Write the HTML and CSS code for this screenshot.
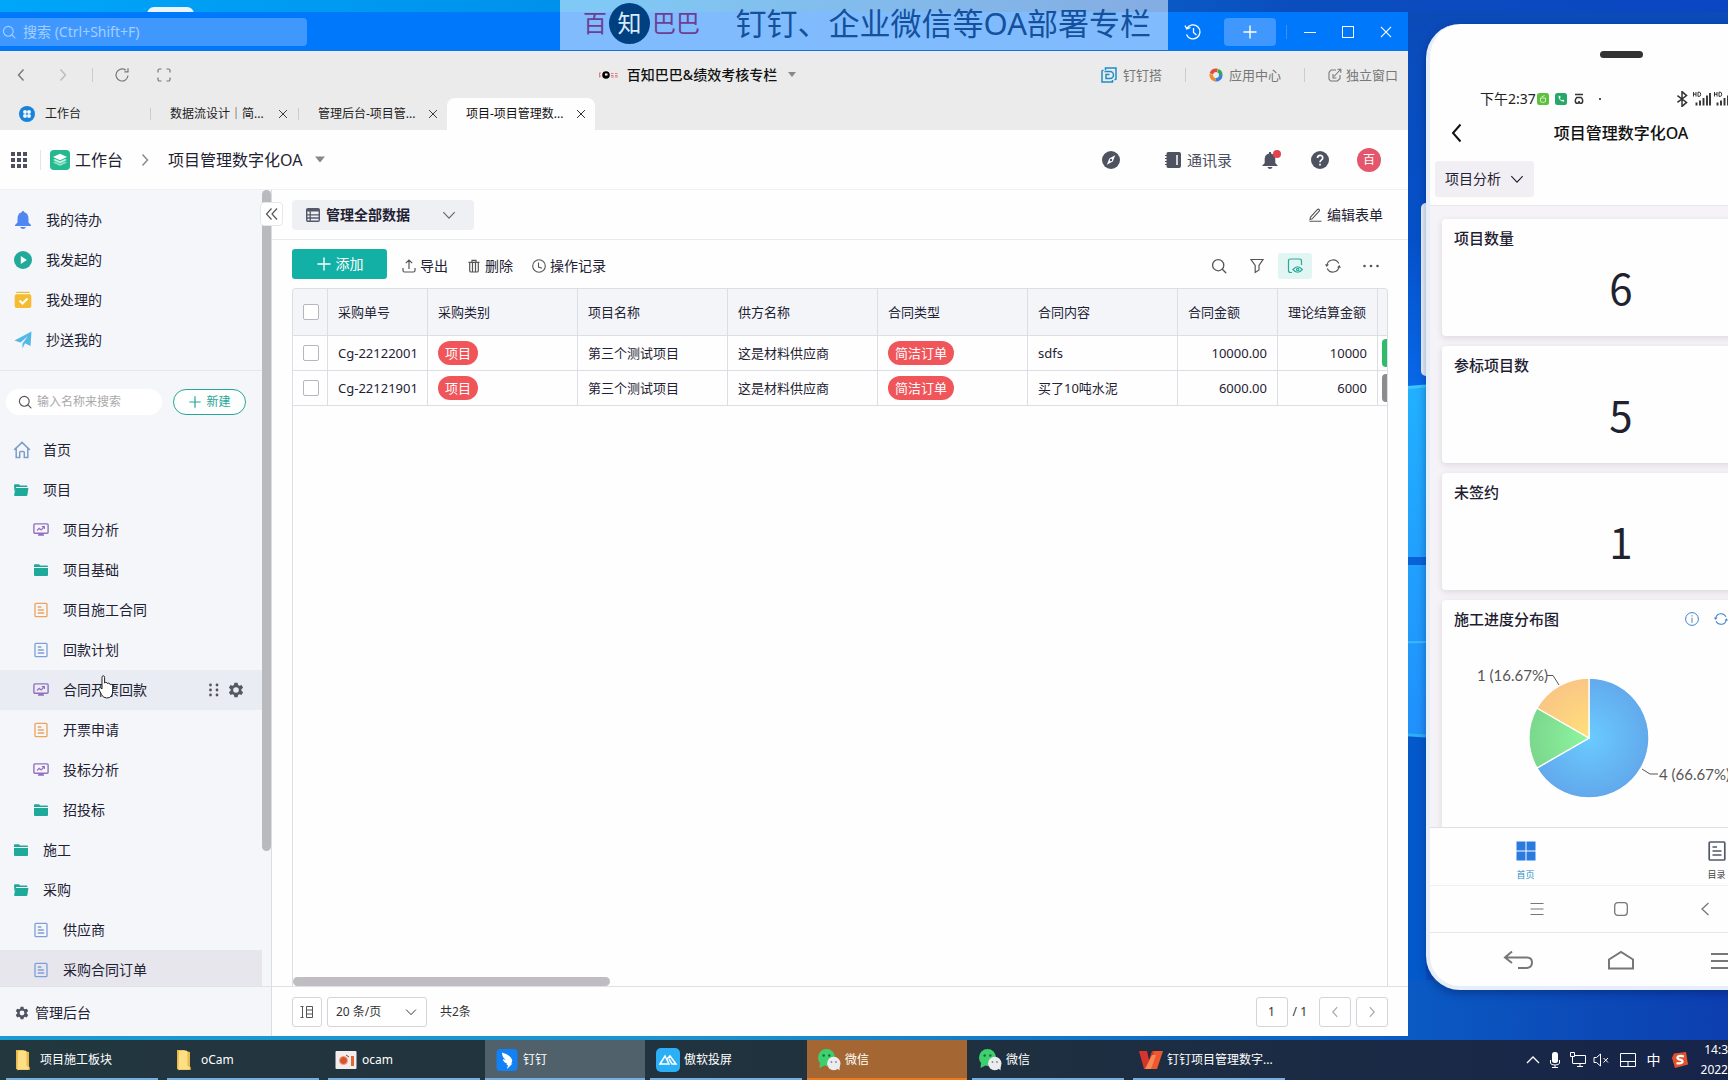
FILE: index.html
```html
<!DOCTYPE html>
<html lang="zh-CN">
<head>
<meta charset="utf-8">
<title>项目管理数字化OA</title>
<link rel="stylesheet" href="styles.css">
</head>
<body>
<svg class="sprite" aria-hidden="true">
  <symbol id="i-search" viewBox="0 0 16 16"><g fill="none" stroke="currentColor" stroke-width="1.3" stroke-linecap="round"><circle cx="7.2" cy="7.2" r="5.6"/><path d="M11.3 11.3 14.8 14.8"/></g></symbol>
  <symbol id="i-x" viewBox="0 0 16 16"><path d="M3.5 3.5 12.5 12.5M12.5 3.5 3.5 12.5" fill="none" stroke="currentColor"/></symbol>
  <symbol id="i-left" viewBox="0 0 16 16"><path d="M10.5 2.5 5.5 8l5 5.5" fill="none" stroke="currentColor" stroke-width="1.4"/></symbol>
  <symbol id="i-right" viewBox="0 0 16 16"><path d="M5.5 2.5 10.5 8l-5 5.5" fill="none" stroke="currentColor" stroke-width="1.4"/></symbol>
  <symbol id="i-down" viewBox="0 0 16 16"><path d="M1.500 4.800 8 11.500l6.500-6.700" fill="none" stroke="currentColor" stroke-width="1.3"/></symbol>
  <symbol id="i-caret" viewBox="0 0 10 6"><path d="M0 0h10L5 6z" fill="currentColor"/></symbol>
  <symbol id="i-plus" viewBox="0 0 16 16"><path d="M8 1.500v13M1.500 8h13" fill="none" stroke="currentColor" stroke-width="1.400"/></symbol>
  <symbol id="i-reload" viewBox="0 0 16 16"><path d="M14 8.500A6 6 0 1 1 11.800 3.300M14 1.300v3.500h-3.600" fill="none" stroke="currentColor" stroke-width="1.200"/></symbol>
  <symbol id="i-full" viewBox="0 0 16 16"><path d="M5.500 2H3.500A1.500 1.500 0 0 0 2 3.500v2M10.500 2h2A1.500 1.500 0 0 1 14 3.500v2M14 10.500v2a1.500 1.500 0 0 1-1.500 1.500h-2M5.500 14h-2A1.500 1.500 0 0 1 2 12.500v-2" fill="none" stroke="currentColor" stroke-width="1.200"/></symbol>
  <symbol id="i-sync" viewBox="0 0 16 16"><path d="M2 6.800A6.200 6.200 0 0 1 13.700 5.600M14 9.200A6.200 6.200 0 0 1 2.300 10.400" fill="none" stroke="currentColor" stroke-width="1.200"/><path d="M0 6.200l4 .200-2.400 2.600zM16 9.800l-4-.200 2.400-2.600z" fill="currentColor"/></symbol>
  <symbol id="i-gear" viewBox="0 0 16 16"><path fill="currentColor" fill-rule="evenodd" d="M6.400.8h3.200l.5 2.200 1.200.7 2.200-.7 1.600 2.800-1.700 1.500v1.400l1.700 1.500-1.600 2.800-2.200-.7-1.200.7-.5 2.200H6.400l-.5-2.200-1.200-.7-2.200.7L.9 10.200l1.700-1.500V7.300L.9 5.800 2.500 3l2.200.7 1.200-.7zM8 5.200a2.800 2.800 0 1 0 0 5.600 2.800 2.800 0 0 0 0-5.600z"/></symbol>
  <symbol id="i-folder" viewBox="0 0 16 16"><path fill="#1fa99b" d="M1 3.200q0-1 1-1h4l1.200 1.300H14q1 0 1 1V5H1zM1 6h14v7q0 .9-1 .9H2q-1 0-1-.9z"/></symbol>
  <symbol id="i-folder-open" viewBox="0 0 16 16"><path fill="#1fa99b" d="M1 3.200q0-1 1-1h4l1.200 1.300H13.500q.9 0 .9 1V5H3.200L1.500 10zM2.800 6h12.600l-1 7q-.2.900-1 .9H2q-1 0-.9-.9z"/></symbol>
  <symbol id="i-chart" viewBox="0 0 16 16"><g fill="none" stroke="#9470be" stroke-width="1.400"><rect x=".9" y="1.900" width="14.200" height="9.400" rx="1"/><path d="M4 8.500l2.200-2.200 2 1.600 3-3M8.800 4.600h2.600v2.300" stroke-width="1.100"/></g><path fill="#9470be" d="M5.500 11.500h5l.6 2.300H4.900z"/></symbol>
  <symbol id="i-doc" viewBox="0 0 16 16"><g fill="none" stroke="currentColor"><rect x="2" y="1.300" width="12" height="13.400" rx="1" stroke-width="1.300"/><path d="M4.800 5h3.600M4.800 8h6M4.800 11h6.400" stroke-width="1.300"/></g></symbol>
  <symbol id="i-home" viewBox="0 0 18 18"><path d="M1.200 8.900 9 1.400l7.800 7.500M3.200 7.600v9h3.500v-5q0-1 1-1h2.600q1 0 1 1v5h3.500v-9" fill="none" stroke="#7f9ccb" stroke-width="1.500"/></symbol>
  <symbol id="i-wechat" viewBox="0 0 24 24"><circle cx="9.500" cy="9.500" r="8.500" fill="#3ed06f"/><path d="M3 15l-.500 5 5-2.500z" fill="#3ed06f"/><circle cx="6.700" cy="7.500" r="1.200" fill="#176a35"/><circle cx="12.300" cy="7.500" r="1.200" fill="#176a35"/><circle cx="16.800" cy="15.500" r="6.700" fill="#ececf0"/><path d="M20 20l2.500 2.500.200-5z" fill="#ececf0"/><circle cx="14.500" cy="14" r=".9" fill="#888"/><circle cx="19" cy="14" r=".9" fill="#888"/></symbol>
  <symbol id="i-yfolder" viewBox="0 0 24 24"><path d="M4 2h7q1 0 1 1l5 1v14l1 3q0 1-1 1H7l-3-1z" fill="#e9b949"/><path d="M6 3l7-.500q1.500 0 1.500 1.500v14l3 1.500-2 2H7l-1.500 1z" fill="#ffdf86"/></symbol>
  <symbol id="i-signal" viewBox="0 0 18 16"><path d="M3.500 11.500v3M7 9.500v5M10.500 7v7.500M14 4.500v10M17 2v12.500" stroke="#333" stroke-width="1.900"/><path d="M.5 1v4.500M.5 3.200h2.500M3 1v4.500M5 1.200v4.200h1.200q1.500 0 1.500-2.100t-1.500-2.100z" fill="none" stroke="#333" stroke-width="1"/></symbol>
</svg>

<div class="desktop">
  <svg class="wallpaper" preserveAspectRatio="none" viewBox="0 0 1728 1080" aria-hidden="true">
    <defs>
      <linearGradient id="sky"><stop offset="0" stop-color="#00a6f8"/><stop offset=".35" stop-color="#0090ea"/><stop offset=".75" stop-color="#0b4dbd"/><stop offset="1" stop-color="#0a46c2"/></linearGradient>
      <linearGradient id="ray" x1="0" y1="0" x2="0" y2="1"><stop offset="0" stop-color="#0b4bb8"/><stop offset=".6" stop-color="#0550c8"/><stop offset="1" stop-color="#0868e8"/></linearGradient>
      <linearGradient id="pane" x1="0" y1="0" x2="0" y2="1"><stop offset="0" stop-color="#22b0ff"/><stop offset="1" stop-color="#2090fb"/></linearGradient>
      <linearGradient id="floor"><stop offset="0" stop-color="#189cd2"/><stop offset=".4" stop-color="#1c93cb"/><stop offset=".8" stop-color="#0a5cc4"/><stop offset="1" stop-color="#0d3eb0"/></linearGradient>
    </defs>
    <rect width="1728" height="1080" fill="url(#sky)"/>
    <rect x="1300" y="12" width="428" height="376" fill="url(#ray)"/>
    <path d="M1300 396 1426 386V736L1300 728z" fill="url(#pane)"/>
    <path d="M1300 396 1426 386" stroke="#3cc6ff" stroke-width="3"/>
    <path d="M1300 557h126v8h-126z" fill="#0a63d6"/>
    <path d="M1300 644 1426 642" stroke="#3fb8ff" stroke-width="2"/>
    <path d="M1300 728 1426 736V1040H1300z" fill="#0459ca"/>
    <path d="M1300 728 1426 736" stroke="#2cb0f4" stroke-width="3"/>
    <path d="M0 980h1728v60H0z" fill="url(#floor)"/>
    <rect x="147" y="7" width="47" height="14" rx="7" fill="#eaf4fb"/>
  </svg>

  <main class="window">
    <header class="titlebar">
      <label class="global-search"><svg class="s14"><use href="#i-search"/></svg><input type="text" placeholder="搜索 (Ctrl+Shift+F)" aria-label="搜索"></label>
      <div class="win-controls">
        <button aria-label="历史"><svg class="s18" viewBox="0 0 18 18" fill="none" stroke="currentColor" stroke-width="1.300"><path d="M3 5.200A7 7 0 1 1 2.500 11.500M1 2.500l1.800 3.500 3.700-1.500M9.500 5v4.500l3 2.500"/></svg></button>
        <button class="new-btn" aria-label="新建"><svg class="s16"><use href="#i-plus"/></svg></button>
        <i class="bar"></i>
        <button aria-label="最小化"><svg class="s12" viewBox="0 0 12 12"><path d="M0 6.500h12" stroke="currentColor"/></svg></button>
        <button aria-label="最大化"><svg class="s12" viewBox="0 0 12 12"><rect x=".5" y=".5" width="11" height="11" fill="none" stroke="currentColor"/></svg></button>
        <button aria-label="关闭"><svg class="s18"><use href="#i-x"/></svg></button>
      </div>
    </header>

    <div class="navbar">
      <div class="nav-left">
        <button aria-label="后退"><svg class="s16"><use href="#i-left"/></svg></button>
        <button class="off" aria-label="前进"><svg class="s16"><use href="#i-right"/></svg></button>
        <i class="bar"></i>
        <button aria-label="刷新"><svg class="s16"><use href="#i-reload"/></svg></button>
        <button aria-label="全屏"><svg class="s16"><use href="#i-full"/></svg></button>
      </div>
      <button class="org"><svg class="org-logo" viewBox="0 0 20 8"><circle cx="8" cy="4" r="3.800" fill="#000"/><path d="M7 2.500h2.500v2H7z" fill="#fff"/><path d="M1 2h2M1.500 2v4.500M3 5h-1M13 2.500h2.500M13 4.500h2.500M13 6h3M17 2.500h2.500M17 4.500h2.500M17 6h3" stroke="#e4606a" stroke-width=".8"/></svg>百知巴巴&amp;绩效考核专栏<svg class="caret"><use href="#i-caret"/></svg></button>
      <div class="nav-right">
        <a href="#"><svg class="s16" viewBox="0 0 16 16" fill="none" stroke="#1f8cc8" stroke-width="1.500"><path d="M4.500 3V1H15v11l-1.500 1M11.500 13v2H1V4l1.500-1"/><path d="M3.500 4.500h5.500a3.500 3.500 0 0 1 0 7H5V7.500h3.500"/></svg>钉钉搭</a>
        <i class="bar"></i>
        <a href="#"><svg class="s14" viewBox="0 0 14 14"><circle cx="7" cy="7" r="4.800" fill="none" stroke="#e14b3c" stroke-width="3.600" stroke-dasharray="7.500 30" stroke-dashoffset="-16"/><circle cx="7" cy="7" r="4.800" fill="none" stroke="#36a852" stroke-width="3.600" stroke-dasharray="7.500 30" stroke-dashoffset="-24"/><circle cx="7" cy="7" r="4.800" fill="none" stroke="#3c7de0" stroke-width="3.600" stroke-dasharray="8 30"/><circle cx="7" cy="7" r="4.800" fill="none" stroke="#f08a2c" stroke-width="3.600" stroke-dasharray="7.500 30" stroke-dashoffset="-8"/></svg>应用中心</a>
        <i class="bar"></i>
        <a class="detach" href="#"><svg class="s14" viewBox="0 0 14 14" fill="none" stroke="#777" stroke-width="1.100"><path d="M8 2H3L1 4.500V11l1.500 2h7L12 10.500V7M6 8.500 12.500 1.500M9.500 1.200h3.300v3.500M5 6v4h3.500"/></svg>独立窗口</a>
      </div>
    </div>

    <nav class="tabs">
      <a class="tab" href="#"><svg class="s16" viewBox="0 0 16 16"><circle cx="8" cy="8" r="8" fill="#1684dc"/><g fill="#fff"><rect x="4.300" y="4.300" width="3.400" height="3.400" rx="1"/><rect x="8.300" y="4.300" width="3.400" height="3.400" rx="1"/><rect x="4.300" y="8.300" width="3.400" height="3.400" rx="1"/><rect x="8.300" y="8.300" width="3.400" height="3.400" rx="1"/></g></svg><span>工作台</span></a>
      <a class="tab" href="#"><span>数据流设计｜简...</span><svg class="s14"><use href="#i-x"/></svg></a>
      <a class="tab plain" href="#"><span>管理后台-项目管...</span><svg class="s14"><use href="#i-x"/></svg></a>
      <a class="tab active" href="#"><span>项目-项目管理数...</span><svg class="s14"><use href="#i-x"/></svg></a>
    </nav>

    <div class="appbar">
      <button class="launcher" aria-label="应用"><svg class="s16" viewBox="0 0 16 16" fill="#4d5060"><path d="M0 0h4v4H0zM6 0h4v4H6zM12 0h4v4h-4zM0 6h4v4H0zM6 6h4v4H6zM12 6h4v4h-4zM0 12h4v4H0zM6 12h4v4H6zM12 12h4v4h-4z"/></svg></button>
      <i class="bar"></i>
      <svg class="s20" viewBox="0 0 20 20"><rect width="20" height="20" rx="4" fill="#25b98f"/><path d="M3 12.500 10 16l7-3.500-2-1-5 2.300-5-2.300z" fill="#8fe2c9"/><path d="M3 10 10 13.300 17 10l-2-1-5 2.300L5 9z" fill="#c9f4e7"/><path d="M3 7 10 3.800 17 7l-7 3.300z" fill="#fff"/></svg>
      <a class="crumb" href="#">工作台</a>
      <svg class="s16 sep"><use href="#i-right"/></svg>
      <a class="crumb" href="#">项目管理数字化OA</a>
      <svg class="caret big"><use href="#i-caret"/></svg>
      <div class="app-actions">
        <button aria-label="导航"><svg class="s18" viewBox="0 0 18 18"><circle cx="9" cy="9" r="9" fill="#4f5261"/><path d="M13.200 4.300 10.800 10.500 4.800 13.700 7.300 7.500z" fill="#fff"/><circle cx="9" cy="9" r="1.200" fill="#4f5261"/></svg></button>
        <button class="contacts"><svg class="s16" viewBox="0 0 16 16"><path fill="#4f5261" d="M3 0h11q2 0 2 2v12q0 2-2 2H3q-1.500 0-1.500-2V2Q1.500 0 3 0z"/><path d="M0 3.500h3M0 6.500h3M0 9.500h3M0 12.500h3" stroke="#4f5261" stroke-width="1.200"/><path d="M12 3v10" stroke="#fff" stroke-width="1.500"/></svg>通讯录</button>
        <button class="bell" aria-label="通知"><svg class="s18" viewBox="0 0 18 18"><path fill="#4f5261" d="M8 1h2v1.500q4.300 1 4.300 5.500v4L17 15H1l2.700-3V8Q3.700 3.500 8 2.500zM6.500 16h5q-.5 2-2.500 2t-2.500-2z"/></svg></button>
        <button aria-label="帮助"><svg class="s18" viewBox="0 0 18 18"><circle cx="9" cy="9" r="9" fill="#4f5261"/><path d="M6.500 7q0-2.700 2.600-2.700T11.700 7q0 1.300-1.400 2.100Q9 9.900 9 11.300M9 12.700v1.700" fill="none" stroke="#fff" stroke-width="1.700"/></svg></button>
        <button class="avatar">百</button>
      </div>
    </div>

    <div class="body">
      <aside class="sidebar">
        <div class="side-scroll">
          <ul class="quick">
            <li><a href="#"><svg class="s18" viewBox="0 0 18 18"><path fill="#5086f2" d="M9 0q1.200 0 1.300 1.300Q14.500 2.500 14.500 8v3.500L17 14v1H1v-1l2.500-2.500V8q0-5.500 4.200-6.700Q7.800 0 9 0zM6 16h6q-1 2-3 2t-3-2z"/></svg>我的待办</a></li>
            <li><a href="#"><svg class="s18" viewBox="0 0 18 18"><circle cx="9" cy="9" r="9" fill="#21a99a"/><path d="M6.800 5v8l6-4z" fill="#fff"/></svg>我发起的</a></li>
            <li><a href="#"><svg class="s18" viewBox="0 0 18 18"><path fill="#f5bb31" d="M3 .8h12q1 0 1 1.200H2Q2 .8 3 .8zM2.500 3.200h13q1.800 0 1.800 1.800v10q0 2-2 2H2.700q-2 0-2-2V5q0-1.800 1.800-1.800z"/><path d="M5.500 9.500l3 3 5-5" fill="none" stroke="#fff" stroke-width="2"/></svg>我处理的</a></li>
            <li><a href="#"><svg class="s18" viewBox="0 0 18 18"><path fill="#51b9e4" d="M.5 9.500 17.500.5l-1 14.500-5.500-2.800L8.500 17.500v-5L14 5l-7.500 6.500z"/></svg>抄送我的</a></li>
          </ul>
          <div class="side-tools">
            <label class="side-search"><svg class="s14"><use href="#i-search"/></svg><input type="text" placeholder="输入名称来搜索" aria-label="输入名称来搜索"></label>
            <button class="create"><svg class="s14"><use href="#i-plus"/></svg>新建</button>
          </div>
          <ul class="tree">
            <li><a href="#"><svg class="s18"><use href="#i-home"/></svg>首页</a></li>
            <li><a href="#"><svg class="s16"><use href="#i-folder-open"/></svg>项目</a>
              <ul>
                <li><a href="#"><svg class="s16"><use href="#i-chart"/></svg>项目分析</a></li>
                <li><a href="#"><svg class="s16"><use href="#i-folder"/></svg>项目基础</a></li>
                <li><a href="#"><svg class="s16 orange"><use href="#i-doc"/></svg>项目施工合同</a></li>
                <li><a href="#"><svg class="s16 blue"><use href="#i-doc"/></svg>回款计划</a></li>
                <li class="hover"><a href="#"><svg class="s16"><use href="#i-chart"/></svg>合同开票回款</a>
                  <span class="row-tools"><svg class="drag" viewBox="0 0 10 14" fill="#555"><circle cx="1.500" cy="2" r="1.400"/><circle cx="8" cy="2" r="1.400"/><circle cx="1.500" cy="7" r="1.400"/><circle cx="8" cy="7" r="1.400"/><circle cx="1.500" cy="12" r="1.400"/><circle cx="8" cy="12" r="1.400"/></svg><svg class="s16"><use href="#i-gear"/></svg></span>
                  <svg class="pointer" viewBox="0 0 16 24"><path d="M4 13V2.500Q4 .8 5.300.8t1.300 1.700V8q.6-.8 1.600-.6 1.200.2 1.200 1.200.7-.7 1.700-.4 1 .3 1 1.400.7-.5 1.600-.1 1 .4 1 1.800V16q0 7-6 7-3.700 0-5.200-3.500L.9 14.500q-.5-1.500.7-1.900 1-.3 2.400 1.400z" fill="#fff" stroke="#222"/></svg>
                </li>
                <li><a href="#"><svg class="s16 orange"><use href="#i-doc"/></svg>开票申请</a></li>
                <li><a href="#"><svg class="s16"><use href="#i-chart"/></svg>投标分析</a></li>
                <li><a href="#"><svg class="s16"><use href="#i-folder"/></svg>招投标</a></li>
              </ul>
            </li>
            <li><a href="#"><svg class="s16"><use href="#i-folder"/></svg>施工</a></li>
            <li><a href="#"><svg class="s16"><use href="#i-folder-open"/></svg>采购</a>
              <ul>
                <li><a href="#"><svg class="s16 blue"><use href="#i-doc"/></svg>供应商</a></li>
                <li class="current"><a href="#"><svg class="s16 blue"><use href="#i-doc"/></svg>采购合同订单</a></li>
              </ul>
            </li>
          </ul>
          <i class="vbar"></i>
        </div>
        <a class="admin" href="#"><svg class="s14"><use href="#i-gear"/></svg>管理后台</a>
        <button class="collapse" aria-label="收起"><svg class="s14" viewBox="0 0 14 14" fill="none" stroke="#555" stroke-width="1.200"><path d="M6.500 1.500 1.500 7l5 5.500M12 1.500 7 7l5 5.500"/></svg></button>
      </aside>

      <section class="content">
        <div class="viewbar">
          <button class="view"><svg class="s14" viewBox="0 0 14 14"><rect x=".7" y=".7" width="12.600" height="12.600" rx="1.200" fill="none" stroke="#555869" stroke-width="1.400"/><path d="M.7 1h12.600v2.500H.7z" fill="#555869"/><path d="M.7 6.800h12.600M.7 10h12.600M4.200 3v10" stroke="#555869" stroke-width="1.300"/></svg><strong>管理全部数据</strong><svg class="s14"><use href="#i-down"/></svg></button>
          <a class="edit" href="#"><svg class="s14" viewBox="0 0 14 14" fill="none" stroke="#555" stroke-width="1.100"><path d="M2.500 9.200 9.500 1.500q.8-.7 1.600 0t.1 1.700L4.200 10.800 2 11.500zM1.500 13.300h12"/></svg>编辑表单</a>
        </div>
        <div class="toolbar">
          <button class="add"><svg class="s16"><use href="#i-plus"/></svg>添加</button>
          <button class="tool"><svg class="s14" viewBox="0 0 14 14" fill="none" stroke="#555" stroke-width="1.200"><path d="M1 9v2.500q0 1.500 1.500 1.500h9q1.500 0 1.500-1.500V9M7 10V1M3.800 4.200 7 1l3.200 3.200"/></svg>导出</button>
          <button class="tool"><svg class="s14" viewBox="0 0 14 14" fill="none" stroke="#555" stroke-width="1.200"><path d="M1.500 3.300h11M5 3V1.300h4V3M2.700 3.500v8.200q0 1.300 1.300 1.300h6q1.300 0 1.300-1.300V3.500M5.500 4v9M8.500 4v9"/></svg>删除</button>
          <button class="tool"><svg class="s14" viewBox="0 0 14 14" fill="none" stroke="#555" stroke-width="1.100"><circle cx="7" cy="7" r="6.300"/><path d="M6.500 3.500V8l3.500 1.300"/></svg>操作记录</button>
          <div class="icon-tools">
            <button aria-label="搜索"><svg class="s16"><use href="#i-search"/></svg></button>
            <button aria-label="筛选"><svg class="s16" viewBox="0 0 16 16" fill="none" stroke="currentColor" stroke-width="1.200"><path d="M2 1.500h12L10 7.500v4.500l-3.800 2.500v-7z"/></svg></button>
            <button class="on" aria-label="显示"><svg class="s16" viewBox="0 0 16 16" fill="none" stroke="currentColor" stroke-width="1.200"><path d="M14.500 7V3q0-2-2-2h-9q-2 0-2 2v9.500q0 2 2 2H5"/><path d="M6 11.500q4.500-5.500 9.300 0-4.800 5.500-9.300 0z"/><circle cx="10.700" cy="11.500" r="1.200"/></svg></button>
            <button aria-label="刷新"><svg class="s16"><use href="#i-sync"/></svg></button>
            <button aria-label="更多"><svg class="s16" viewBox="0 0 16 16" fill="#555"><circle cx="1.500" cy="8" r="1.300"/><circle cx="8" cy="8" r="1.300"/><circle cx="14.500" cy="8" r="1.300"/></svg></button>
          </div>
        </div>
        <div class="grid">
          <table>
            <colgroup><col class="c-check"><col class="c-s"><col class="c-m"><col class="c-m"><col class="c-m"><col class="c-m"><col class="c-m"><col class="c-s"><col class="c-s"><col class="c-s"></colgroup>
            <thead><tr><th><input type="checkbox" aria-label="全选"></th><th>采购单号</th><th>采购类别</th><th>项目名称</th><th>供方名称</th><th>合同类型</th><th>合同内容</th><th>合同金额</th><th>理论结算金额</th><th></th></tr></thead>
            <tbody>
              <tr><td><input type="checkbox" aria-label="Cg-22122001"></td><td>Cg-22122001</td><td><span class="tag">项目</span></td><td>第三个测试项目</td><td>这是材料供应商</td><td><span class="tag">简洁订单</span></td><td>sdfs</td><td class="num">10000.00</td><td class="num">10000</td><td class="cut"><span class="state green"></span></td></tr>
              <tr><td><input type="checkbox" aria-label="Cg-22121901"></td><td>Cg-22121901</td><td><span class="tag">项目</span></td><td>第三个测试项目</td><td>这是材料供应商</td><td><span class="tag">简洁订单</span></td><td>买了10吨水泥</td><td class="num">6000.00</td><td class="num">6000</td><td class="cut"><span class="state gray"></span></td></tr>
            </tbody>
          </table>
          <i class="hbar"></i>
        </div>
        <footer class="pager">
          <button class="box density" aria-label="行高"><svg class="s14" viewBox="0 0 14 14" fill="none" stroke="#555"><path d="M2.500 1.500v11M.5 1.500h3M.5 12.500h3M6.500 1.500h6v11h-6zM6.500 5h6M6.500 9h6"/></svg></button>
          <label class="box size"><select aria-label="每页条数"><option>20 条/页</option></select><svg class="s12"><use href="#i-down"/></svg></label>
          <span class="total">共2条</span>
          <input class="box page" type="text" value="1" aria-label="页码"><span class="of">/ 1</span>
          <button class="box step" aria-label="上一页"><svg class="s14"><use href="#i-left"/></svg></button>
          <button class="box step" aria-label="下一页"><svg class="s14"><use href="#i-right"/></svg></button>
        </footer>
      </section>
    </div>
  </main>

  <div class="banner">
    <span class="brand">百<b>知</b>巴巴</span>
    <span class="slogan">钉钉、企业微信等OA部署专栏</span>
  </div>

  <i class="phone-key"></i>
  <section class="phone">
    <div class="earpiece"><i></i></div>
    <div class="status">
      <span>下午2:37</span>
      <svg class="s12" viewBox="0 0 12 12"><rect width="12" height="12" rx="2.500" fill="#5fc040"/><path d="M3.500 5h5v3.500q-2.500 2-5 0zM4.500 4l3-1.500" fill="none" stroke="#d9f7cd" stroke-width=".9"/></svg>
      <svg class="s12 call" viewBox="0 0 12 12"><rect width="12" height="12" rx="2.500" fill="#25a868"/><path d="M3.500 2.800Q3.500 8.500 9.200 8.800L9 7 7.700 6.700l-.8.600Q5.500 6.700 4.900 5.400l.7-.8L5.200 3z" fill="#fff"/></svg>
      <svg class="s12" viewBox="0 0 12 12" fill="none" stroke="#333"><path d="M2 1.500h8M3.800 4.500q-1.500 1.300-1.500 3.200 0 2.600 2 2.600 1.700 0 1.700-2.300 0 2.300 1.700 2.300 2 0 2-2.600 0-1.900-1.500-3.200z" stroke-width="1.500"/></svg>
      <i class="dot"></i>
      <div class="radio">
        <svg class="s16" viewBox="0 0 14 14" fill="none" stroke="#333" stroke-width="1.300"><path d="M3 4l8 6L7 13.500V.5L11 4l-8 6"/></svg>
        <svg class="sig"><use href="#i-signal"/></svg><svg class="sig"><use href="#i-signal"/></svg>
        <svg class="sig" viewBox="0 0 18 16"></svg><svg class="sig" viewBox="0 0 18 16"></svg>
      </div>
    </div>
    <div class="phone-title"><button aria-label="返回"><svg class="s20" viewBox="0 0 20 20"><path d="M14.500 1.500 7 10l7.500 8.500" fill="none" stroke="#111" stroke-width="2"/></svg></button><h1>项目管理数字化OA</h1></div>
    <div class="phone-filter"><button>项目分析<svg class="s14"><use href="#i-down"/></svg></button></div>
    <div class="cards">
      <article class="card"><h2>项目数量</h2><p>6</p></article>
      <article class="card"><h2>参标项目数</h2><p>5</p></article>
      <article class="card"><h2>未签约</h2><p>1</p></article>
      <article class="card">
        <h2>施工进度分布图<span class="card-icons"><svg class="s14" viewBox="0 0 14 14" fill="none" stroke="currentColor"><circle cx="7" cy="7" r="6.400"/><path d="M7 3.200v1.300M7 5.800v5"/></svg><svg class="s14"><use href="#i-sync"/></svg><svg class="s14"></svg><svg class="s14"></svg></span></h2>
        <svg class="pie" viewBox="0 0 334 200">
          <defs>
            <radialGradient id="pb" gradientUnits="userSpaceOnUse" cx="135" cy="108" r="60"><stop offset="0" stop-color="#6acbff"/><stop offset="1" stop-color="#62a9ec"/></radialGradient>
            <radialGradient id="pg" gradientUnits="userSpaceOnUse" cx="135" cy="108" r="60"><stop offset="0" stop-color="#8ff5a0"/><stop offset="1" stop-color="#7ad78c"/></radialGradient>
            <radialGradient id="po" gradientUnits="userSpaceOnUse" cx="135" cy="108" r="60"><stop offset="0" stop-color="#ffe07a"/><stop offset="1" stop-color="#fac585"/></radialGradient>
          </defs>
          <g stroke="#fff" stroke-width="1.300">
            <path d="M135 109V49A60 60 0 1 1 83 139z" fill="url(#pb)"/>
            <path d="M135 109 83 139A60 60 0 0 1 83 79z" fill="url(#pg)"/>
            <path d="M135 109 83 79A60 60 0 0 1 135 49z" fill="url(#po)"/>
          </g>
          <path d="M93 46.500h6l6 9.500M188 140l8 5h8" fill="none" stroke="#555"/>
          <text x="23" y="52">1 (16.67%)</text>
          <text x="205" y="151">4 (66.67%)</text>
        </svg>
      </article>
    </div>
    <nav class="phone-tabs">
      <a class="on" href="#"><svg class="s20" viewBox="0 0 20 20" fill="#2a7ae0"><path d="M.5.500h9v9h-9zM10.500.500h9v9h-9zM.5 10.500h9v9h-9zM10.500 10.500h9v9h-9z"/></svg>首页</a>
      <a href="#"><svg class="s20" viewBox="0 0 20 20" fill="none" stroke="#555869"><rect x="2.200" y="1" width="15.600" height="18" rx="1" stroke-width="1.700"/><path d="M5.500 6h4.500M5.500 10h9M5.500 14h9" stroke-width="1.700"/></svg>目录</a>
    </nav>
    <div class="sysnav">
      <svg class="s14" viewBox="0 0 14 14"><path d="M.5 1.500h13M.5 7h13M.5 12.500h13" stroke="#777" stroke-width="1.200"/></svg>
      <svg class="s14" viewBox="0 0 14 14"><rect x=".7" y=".7" width="12.600" height="12.600" rx="3" fill="none" stroke="#777" stroke-width="1.300"/></svg>
      <svg class="s14" viewBox="0 0 14 14"><path d="M10.500 1 4 7l6.500 6" fill="none" stroke="#777" stroke-width="1.300"/></svg>
    </div>
    <div class="hardkeys">
      <svg class="key" viewBox="0 0 30 20" fill="none" stroke="#777" stroke-width="2"><path d="M9 1.500 2 7.500l7 5.500M2.500 7.500H24q5 0 5 5t-5 5.500H15"/></svg>
      <svg class="key" viewBox="0 0 30 20" fill="none" stroke="#777" stroke-width="2"><path d="M3 18.500V9.500L15 2l12 7.500v9z"/></svg>
      <svg class="key" viewBox="0 0 30 20" fill="none" stroke="#777" stroke-width="2"><path d="M2 4h26M2 11h26M2 18h26"/></svg>
    </div>
  </section>

  <footer class="taskbar">
    <button class="task"><svg class="s24"><use href="#i-yfolder"/></svg>项目施工板块</button>
    <button class="task"><svg class="s24"><use href="#i-yfolder"/></svg>oCam</button>
    <button class="task"><svg class="s24" viewBox="0 0 24 24"><rect x="1.500" y="3" width="21" height="18" rx="1" fill="#f3eeee"/><circle cx="9.500" cy="12.500" r="4" fill="#d8552c" stroke="#f0a183"/><path d="M17 8h3v10h-3z" fill="#e0673a"/><path d="M12 7l3 2" stroke="#a33"/></svg>ocam</button>
    <button class="task active"><svg class="s24" viewBox="0 0 24 24"><rect x="1.500" y="1" width="21" height="22" rx="4" fill="#1281f5"/><path d="M7 4.500q8 2 10 7 .7 2-1 4h1.500L12 21l1-4h-1.500l.5-1.500Q8 14 8 11l3 1Q7 9.500 7 4.500z" fill="#fff"/></svg>钉钉</button>
    <button class="task"><svg class="s24" viewBox="0 0 24 24"><rect x="0" y="0" width="24" height="24" rx="5" fill="#2bb0f8"/><path d="M4 16 9 8l4 8zM11 11l3-3 6 8h-4l-3-5" fill="none" stroke="#fff" stroke-width="1.500"/></svg>傲软投屏</button>
    <button class="task alert"><svg class="s24"><use href="#i-wechat"/></svg>微信</button>
    <button class="task"><svg class="s24"><use href="#i-wechat"/></svg>微信</button>
    <button class="task"><svg class="s24" viewBox="0 0 24 24"><path d="M0 3h8l2 9 3-9h4L11 21H5z" fill="#d9342b"/><path d="M15 3h9l-6 18h-7z" fill="#f0562f"/><path d="M13 7h4l-5 14H6z" fill="#f58a52"/></svg>钉钉项目管理数字...</button>
    <div class="tray">
      <svg class="s14" viewBox="0 0 14 14"><path d="M1 10 7 4l6 6" fill="none" stroke="#fff" stroke-width="1.300"/></svg>
      <svg class="s16" viewBox="0 0 16 16"><rect x="5" y="0" width="6" height="11" rx="2.500" fill="#fff"/><path d="M3.500 8v3q0 2 4.500 2t4.500-2V8M8 13v2.500M5 15.500h6" fill="none" stroke="#fff"/></svg>
      <svg class="s16" viewBox="0 0 16 16" fill="none" stroke="#fff"><path d="M5 3.500h10.500v8H3M10 11.500v3M7 14.500h6M.5.5h4v4h-4zM2.500 4.500v7"/></svg>
      <svg class="s16" viewBox="0 0 16 16" fill="none" stroke="#fff"><path d="M1 5.500h2.500L7.500 2v12l-4-3.500H1zM10.500 6l4.500 4.500M15 6l-4.500 4.500"/></svg>
      <svg class="s16 ime" viewBox="0 0 16 16" fill="none" stroke="#fff"><path d="M.5 1.500h15v13H.5zM.5 9.500h15M8 9.500v5"/></svg>
      <span class="lang">中</span>
      <svg class="s16" viewBox="0 0 16 16"><path d="M2 1.500 14 0l2 12.500L3 16 0 6z" fill="#e5512b"/><path d="M12 4.500q-5.500-1.500-6.500.8-.5 1.700 2.500 2.300t2.500 2.500q-1 2-6 1" fill="none" stroke="#fff" stroke-width="2.200"/></svg>
      <span class="clock"><span>14:3</span><span>2022</span></span>
    </div>
  </footer>
</div>
</body>
</html>
```
FILE: styles.css
```css
* { box-sizing: border-box; }
body {
  margin: 0;
  font: 14px/20px "Noto Sans", "Noto Sans CJK SC", sans-serif;
  color: #1f2233;
}
button, input, select { font: inherit; color: inherit; margin: 0; }
button { border: 0; background: none; padding: 0; display: flex; align-items: center; justify-content: center; white-space: nowrap; }
a { color: inherit; text-decoration: none; white-space: nowrap; }
ul { list-style: none; margin: 0; padding: 0; }
h1, h2, p { margin: 0; font-weight: 500; }
svg { flex: none; display: block; }
input::placeholder { color: inherit; opacity: 1; }

.sprite { position: absolute; width: 0; height: 0; }
.s12 { width: 12px; height: 12px; }
.s14 { width: 14px; height: 14px; }
.s16 { width: 16px; height: 16px; }
.s18 { width: 18px; height: 18px; }
.s20 { width: 20px; height: 20px; }
.s24 { width: 24px; height: 24px; }
.caret { width: 8px; height: 5px; color: #888; }
.caret.big { width: 10px; height: 7px; }
.bar { width: 1px; height: 14px; background: #ccc; }

.desktop { position: relative; height: 100vh; overflow: hidden; }
.wallpaper { position: absolute; inset: 0; width: 100%; height: 100%; }

.window {
  position: absolute;
  top: 12px; left: 0; right: 320px; bottom: 44px;
  display: flex;
  flex-direction: column;
  background: #fefefe;
}

.titlebar { display: flex; justify-content: space-between; align-items: center; height: 39px; padding-top: 2px; background: #0078fb; border-bottom: 1px solid #1a6fd0; color: #fff; }
.global-search { display: flex; align-items: center; gap: 7px; width: 307px; height: 28px; padding-left: 2px; background: #4098ff; border-radius: 0 4px 4px 0; color: #a3cfff; }
.global-search input { border: 0; background: none; width: 200px; padding: 0; }
.win-controls { display: flex; align-items: center; padding-right: 3px; }
.win-controls button { width: 38px; height: 28px; }
.win-controls .new-btn { width: 52px; margin: 0 10px 0 12px; background: #4098ff; border-radius: 4px; }
.win-controls .bar { background: #3f92ee; margin-right: 4px; }

.navbar { display: flex; align-items: center; justify-content: space-between; height: 47px; padding-bottom: 2px; background: #ebebeb; border-top: 2px solid #e2effa; }
.nav-left { display: flex; align-items: center; width: 350px; color: #777; }
.nav-left button { width: 42px; height: 28px; }
.nav-left .bar { margin: 0 8px; }
.nav-left .off { color: #bbb; }
.org { gap: 9px; font-weight: 500; color: #111; }
.org .caret { margin-left: 2px; }
.org-logo { width: 20px; height: 8px; }
.nav-right { display: flex; align-items: center; gap: 23px; width: 364px; padding-right: 10px; justify-content: flex-end; font-size: 13px; color: #777; }
.nav-right a { display: flex; align-items: center; gap: 6px; }
.nav-right .detach { gap: 4px; }

.tabs { display: flex; height: 32px; background: #ebebeb; font-size: 12px; color: #222; }
.tab { position: relative; display: flex; align-items: center; gap: 10px; width: 148px; padding: 0 9px 0 19px; }
.tab:first-child { width: 151px; }
.tab span { flex: 1; }
.tab:not(.active):not(.plain)::after { content: ""; position: absolute; right: 0; width: 1px; height: 12px; background: #ccc; }
.tab.active { background: #fefefe; border-radius: 8px 8px 0 0; color: #111; }

.appbar { display: flex; align-items: center; height: 60px; padding: 0 27px 0 11px; border-bottom: 1px solid #f0f0f2; }
.appbar > .bar { height: 20px; background: #e4e4e8; margin: 0 9px 0 13px; }
.crumb { font-size: 16px; margin-left: 5px; }
.appbar .sep { margin: 0 10px 0 14px; color: #888; }
.appbar > .caret { margin-left: 13px; }
.app-actions { display: flex; align-items: center; margin-left: auto; }
.app-actions button { font-size: 15px; color: #4b4e5e; }
.contacts { gap: 6px; margin: 0 29px 0 45px; }
.bell { position: relative; margin-right: 32px; }
.bell::after { content: ""; position: absolute; top: -1px; right: -2px; width: 8px; height: 8px; border-radius: 50%; background: #e4434d; }
.app-actions .avatar { width: 24px; height: 24px; margin-left: 28px; border-radius: 50%; background: #e4566c; color: #fff; font-size: 12px; }

.body { display: flex; flex: 1; min-height: 0; }
.sidebar { position: relative; display: flex; flex-direction: column; width: 272px; flex: none; background: #f4f6fa; border-right: 1px solid #dcdde2; }
.side-scroll { position: relative; flex: 1; min-height: 0; overflow: hidden; }
.vbar { position: absolute; top: 0; right: 0; width: 9px; height: 83%; border-radius: 5px; background: #b9babe; }
.quick { padding: 10px 0; border-bottom: 1px solid #e4e6eb; }
.quick a { display: flex; align-items: center; gap: 14px; height: 40px; padding-left: 14px; }
.side-tools { display: flex; gap: 11px; padding: 18px 25px 15px 6px; }
.side-search { display: flex; align-items: center; gap: 5px; width: 156px; height: 26px; padding-left: 12px; border-radius: 13px; background: #fff; color: #555; font-size: 12px; }
.side-search input { border: 0; background: none; padding: 0; width: 110px; color: #aaa; }
.create { width: 73px; height: 26px; gap: 4px; border: 1px solid #2aa596; border-radius: 13px; background: #fdfefe; color: #2aa596; font-size: 12px; }
.tree li { position: relative; }
.tree a { display: flex; align-items: center; height: 40px; padding-left: 13px; gap: 14px; margin-right: 9px; }
.tree a .s18 { margin-right: -2px; }
.tree ul a { padding-left: 33px; }
.tree .hover > a { background: #e9ecf2; }
.tree .current > a { background: #e6e6ec; }
.orange { color: #eea35d; }
.blue { color: #7f9fd8; }
.row-tools { position: absolute; right: 27px; top: 12px; display: flex; align-items: center; gap: 9px; color: #555862; }
.drag { width: 10px; height: 14px; }
.pointer { position: absolute; left: 98px; top: 5px; width: 16px; height: 24px; }
.admin { display: flex; align-items: center; gap: 6px; height: 50px; padding: 2px 0 0 15px; border-top: 1px solid #e2e3e8; }
.admin svg { color: #4f5261; }
.collapse { position: absolute; top: 12px; right: -12px; width: 23px; height: 24px; background: #fff; border: 1px solid #e6e7ec; border-radius: 4px; }

.content { flex: 1; min-width: 0; display: flex; flex-direction: column; }
.viewbar { display: flex; align-items: center; justify-content: space-between; height: 50px; padding: 0 25px 0 20px; border-bottom: 1px solid #e8e9ed; }
.view { width: 182px; height: 30px; gap: 6px; padding: 0 18px 0 14px; justify-content: flex-start; background: #eff0f4; border-radius: 4px; }
.view strong { flex: 1; text-align: left; font-weight: 600; }
.view .s14:last-child { color: #666; }
.edit { display: flex; align-items: center; gap: 5px; }
.toolbar { display: flex; align-items: flex-start; height: 48px; padding: 9px 20px 0; }
.add { width: 95px; height: 30px; gap: 4px; margin-right: 5px; background: #13b0a5; border-radius: 3px; color: #fff; }
.tool { height: 34px; gap: 4px; margin-left: 10px; margin-right: 9px; }
.icon-tools { display: flex; align-items: center; gap: 4px; height: 34px; margin-left: auto; color: #555; }
.icon-tools button { width: 34px; height: 26px; }
.icon-tools .on { background: #e1f5f3; color: #2aa99c; border-radius: 3px; }

.grid { position: relative; flex: 1; min-height: 0; margin: 0 20px; overflow: hidden; border: 1px solid #dcdde5; border-bottom: 0; border-radius: 4px 4px 0 0; }
table { table-layout: fixed; width: 1184px; border-collapse: separate; border-spacing: 0; font-size: 13px; }
.c-check { width: 35px; }
.c-s { width: 100px; }
.c-m { width: 150px; }
th, td { padding: 0 10px; text-align: left; font-weight: 400; border: 0 solid #dcdde5; border-width: 0 1px 1px 0; white-space: nowrap; }
th { height: 47px; background: #f4f5f9; }
td { height: 35px; }
th input, td input { appearance: none; display: block; width: 16px; height: 16px; border: 1px solid #b4b7bf; border-radius: 2px; background: #fff; }
.num { text-align: right; }
.tag { display: block; width: max-content; height: 24px; padding: 0 7px; border-radius: 12px; background: #f05559; color: #fff; line-height: 24px; font-size: 13px; }
.cut { padding: 0 4px; }
.state { display: block; width: 60px; height: 28px; border-radius: 4px; }
.state.green { background: #2fba6c; }
.state.gray { background: #8c8c8c; }
.hbar { position: absolute; left: 0; bottom: 0; width: 29%; height: 9px; border-radius: 5px; background: #bfbdc1; }

.pager { display: flex; align-items: center; gap: 5px; height: 50px; padding: 0 20px; border-top: 1px solid #dfe0e5; font-size: 12px; color: #333; }
.box { height: 30px; border: 1px solid #d4d5da; border-radius: 3px; background: #fff; }
.density { width: 30px; }
.size { display: flex; align-items: center; justify-content: space-between; width: 100px; padding: 0 9px 0 8px; }
.size select { appearance: none; border: 0; background: none; padding: 0; }
.total { flex: 1; margin-left: 8px; }
.page { width: 32px; text-align: center; padding: 0; }
.of { margin-right: 7px; }
.step { width: 32px; color: #aaa; }

.banner { position: absolute; left: 560px; top: 0; width: 608px; height: 50px; display: flex; align-items: center; padding: 0 17px 4px 23px; justify-content: space-between; background: rgba(255, 255, 255, .5); white-space: nowrap; }
.brand { display: flex; align-items: center; gap: 2px; font-size: 24px; color: #6c3f94; }
.brand b { width: 41px; height: 41px; border-radius: 50%; background: #003f80; color: #d8eafa; font-weight: 400; text-align: center; line-height: 40px; }
.slogan { font-size: 31px; line-height: 44px; color: #14509c; }

.phone-key { position: absolute; right: 295px; top: 203px; width: 12px; height: 173px; border-radius: 5px; background: #edf3fa; }
.phone { position: absolute; right: -88px; top: 24px; width: 390px; bottom: 90px; display: flex; flex-direction: column; overflow: hidden; background: #fefefe; border: 0 solid #e6eef8; border-width: 0 4px 4px; border-radius: 34px; box-shadow: 0 3px 8px rgba(0, 20, 80, .4); }
.earpiece { display: flex; align-items: center; justify-content: center; height: 53px; padding-top: 8px; }
.earpiece i { width: 43px; height: 7px; border-radius: 4px; background: #333; }
.status { display: flex; align-items: center; gap: 6px; height: 44px; padding: 0 38px 0 50px; color: #222; }
.status > span { margin-right: -5px; }
.dot { width: 2px; height: 2px; margin-left: 8px; background: #555; }
.radio { display: flex; gap: 3px; margin-left: auto; }
.sig { width: 18px; height: 16px; }
.phone-title { display: flex; align-items: center; height: 24px; padding: 0 16px; }
.phone-title h1 { flex: 1; margin-right: 20px; text-align: center; font-size: 16px; color: #111; }
.phone-filter { padding: 16px 5px 8px; border-bottom: 1px solid #e8e8ec; }
.phone-filter button { width: 99px; height: 36px; gap: 9px; background: #f1eff4; border-radius: 3px; }
.cards { flex: 1; min-height: 0; overflow: hidden; display: flex; flex-direction: column; gap: 10px; padding: 13px 12px 0; background: #f5f3f7; }
.card { flex: none; height: 117px; padding: 9px 12px; background: #fefefe; border-radius: 4px; box-shadow: 0 2px 6px rgba(70, 50, 80, .14); }
.card:last-child { height: auto; }
.card h2 { display: flex; justify-content: space-between; align-items: center; font-size: 15px; line-height: 20px; color: #1d2030; }
.card p { margin-top: 9px; text-align: center; font: 400 42px/60px "Noto Sans CJK SC", sans-serif; color: #1f2330; }
.card-icons { display: flex; gap: 15px; padding-right: 2px; color: #3f83c8; }
.pie { width: 334px; height: 200px; }
.pie text { font: 400 15px Lato, sans-serif; fill: #555; }
.phone-tabs { display: flex; height: 58px; border-top: 1px solid #dfe0e5; }
.phone-tabs a { flex: 1; display: flex; flex-direction: column; align-items: center; gap: 4px; padding-top: 13px; font-size: 9px; line-height: 20px; color: #444; }
.phone-tabs .on { color: #2a8fc8; }
.sysnav { display: flex; align-items: center; justify-content: center; gap: 70px; height: 47px; border-top: 1px solid #f0f0f2; color: #777; }
.hardkeys { display: flex; align-items: center; justify-content: center; gap: 73px; height: 54px; border-top: 1px solid #e6e8ec; }
.key { width: 30px; height: 20px; }

.taskbar { position: absolute; left: 0; right: 0; bottom: 0; height: 40px; display: flex; gap: 1px; padding-left: 2px; background: linear-gradient(90deg, #23373f, #20323e 50%, #16244a); color: #fff; font-size: 12px; }
.task { position: relative; width: 160px; flex: none; justify-content: flex-start; gap: 4px; padding-left: 10px; }
.task::after { content: ""; position: absolute; left: 4px; right: 4px; bottom: 0; height: 2px; background: #76aee0; }
.task.active { background: #50616b; }
.task.alert { background: #a46734; }
.task.active::after, .task.alert::after { left: 0; right: 0; }
.task.alert::after { background: #ee7a20; }
.tray { display: flex; align-items: center; gap: 7px; margin-left: auto; }
.ime { margin-left: 4px; }
.lang { margin: 0 4px; font-size: 14px; }
.clock { display: flex; flex-direction: column; align-items: flex-end; margin-left: 6px; }
```
